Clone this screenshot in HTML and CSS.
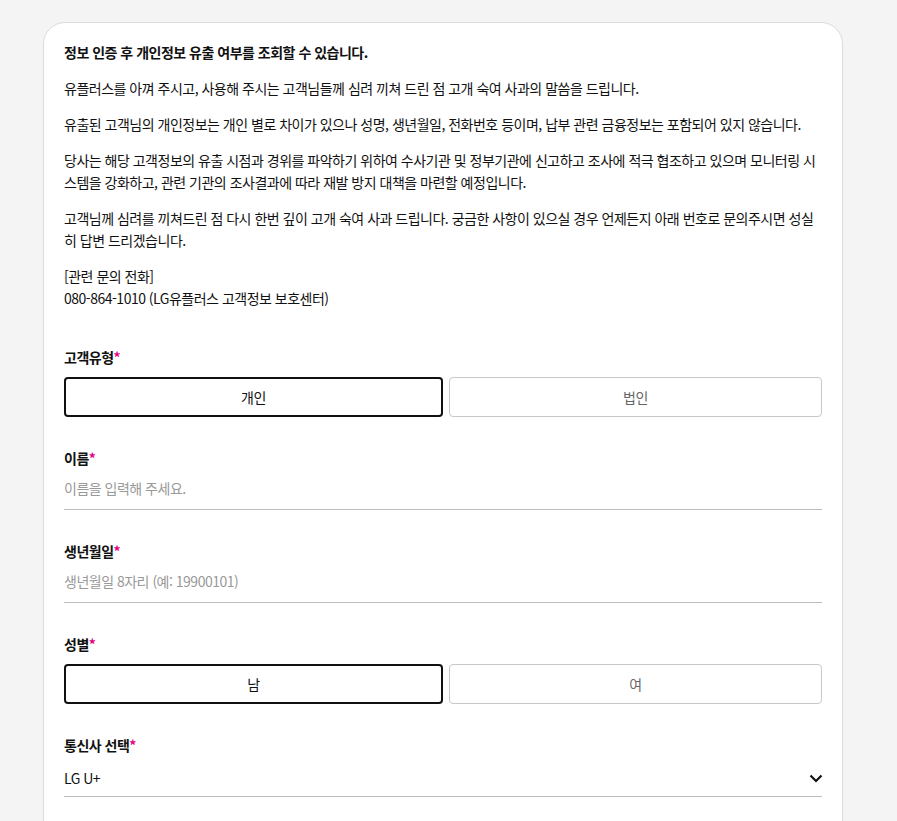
FILE: index.html
```html
<!DOCTYPE html>
<html lang="ko">
<head>
  <meta charset="UTF-8">
  <meta name="viewport" content="width=device-width, initial-scale=1.0">
  <title>개인정보 유출 조회</title>
  <link rel="stylesheet" href="styles.css">
</head>
<body>

  <div class="card">
    <div class="notice">
      <p class="lead">정보 인증 후 개인정보 유출 여부를 조회할 수 있습니다.</p>
      <p>유플러스를 아껴 주시고, 사용해 주시는 고객님들께 심려 끼쳐 드린 점 고개 숙여 사과의 말씀을 드립니다.</p>
      <p>유출된 고객님의 개인정보는 개인 별로 차이가 있으나 성명, 생년월일, 전화번호 등이며, 납부 관련 금융정보는 포함되어 있지 않습니다.</p>
      <p>당사는 해당 고객정보의 유출 시점과 경위를 파악하기 위하여 수사기관 및 정부기관에 신고하고 조사에 적극 협조하고 있으며 모니터링 시스템을 강화하고, 관련 기관의 조사결과에 따라 재발 방지 대책을 마련할 예정입니다.</p>
      <p>고객님께 심려를 끼쳐드린 점 다시 한번 깊이 고개 숙여 사과 드립니다. 궁금한 사항이 있으실 경우 언제든지 아래 번호로 문의주시면 성실히 답변 드리겠습니다.</p>
      <p>[관련 문의 전화]<br>080-864-1010 (LG유플러스 고객정보 보호센터)</p>
    </div>

    <form class="form">
      <div class="field">
        <label class="label">고객유형<span class="req">*</span></label>
        <div class="toggle">
          <button type="button" class="opt active">개인</button>
          <button type="button" class="opt">법인</button>
        </div>
      </div>

      <div class="field">
        <label class="label" for="name">이름<span class="req">*</span></label>
        <input id="name" class="input" type="text" placeholder="이름을 입력해 주세요.">
      </div>

      <div class="field">
        <label class="label" for="birth">생년월일<span class="req">*</span></label>
        <input id="birth" class="input" type="text" placeholder="생년월일 8자리 (예: 19900101)">
      </div>

      <div class="field">
        <label class="label">성별<span class="req">*</span></label>
        <div class="toggle">
          <button type="button" class="opt active">남</button>
          <button type="button" class="opt">여</button>
        </div>
      </div>

      <div class="field">
        <label class="label" for="carrier">통신사 선택<span class="req">*</span></label>
        <div class="select">
          <span>LG U+</span>
          <svg width="16" height="16" viewBox="0 0 16 16"><path d="M2.5 5.5 L8 11 L13.5 5.5" fill="none" stroke="#111" stroke-width="2.2"/></svg>
        </div>
      </div>
    </form>
  </div>

</body>
</html>
```

FILE: styles.css
```css
body {
  margin: 0;
  background: #f4f4f4;
  font-family: "Noto Sans CJK KR", "Noto Sans", sans-serif;
  color: #111;
}

.card {
  width: 800px;
  box-sizing: border-box;
  margin: 22px 0 0 43px;
  padding: 18px 20px 40px;
  background: #fff;
  border: 1px solid #dcdcdc;
  border-radius: 22px;
  min-height: 900px;
}

.notice p {
  margin: 0 0 14px;
  font-size: 14px;
  line-height: 22px;
  letter-spacing: -0.5px;
}

.notice p.lead {
  font-weight: bold;
}

.form {
  margin-top: 37px;
}

.field {
  margin-bottom: 30px;
}

.label {
  display: block;
  font-size: 14px;
  font-weight: bold;
  line-height: 22px;
  margin-bottom: 9px;
  letter-spacing: -0.5px;
}

.req {
  color: #e6007e;
}

.toggle {
  display: flex;
  gap: 6px;
}

.opt {
  flex: 1;
  height: 40px;
  background: #fff;
  border: 1px solid #c8c8c8;
  border-radius: 4px;
  font-family: inherit;
  font-size: 14px;
  letter-spacing: -0.5px;
  color: #666;
  cursor: pointer;
}

.opt.active {
  flex: 0 0 50%;
  border: 2px solid #111;
  color: #111;
}

.input {
  display: block;
  width: 100%;
  box-sizing: border-box;
  height: 36px;
  margin-top: -4px;
  padding: 0 0 7px;
  border: none;
  border-bottom: 1px solid #bcbcbc;
  font-family: inherit;
  font-size: 14px;
  letter-spacing: -0.5px;
  outline: none;
}

.input::placeholder {
  color: #999;
}

.select {
  display: flex;
  align-items: center;
  justify-content: space-between;
  height: 36px;
  margin-top: -4px;
  padding: 3px 0 5px;
  box-sizing: border-box;
  border-bottom: 1px solid #bcbcbc;
  font-size: 14px;
  letter-spacing: -0.5px;
}

.select svg {
  margin-right: -2px;
}
```
